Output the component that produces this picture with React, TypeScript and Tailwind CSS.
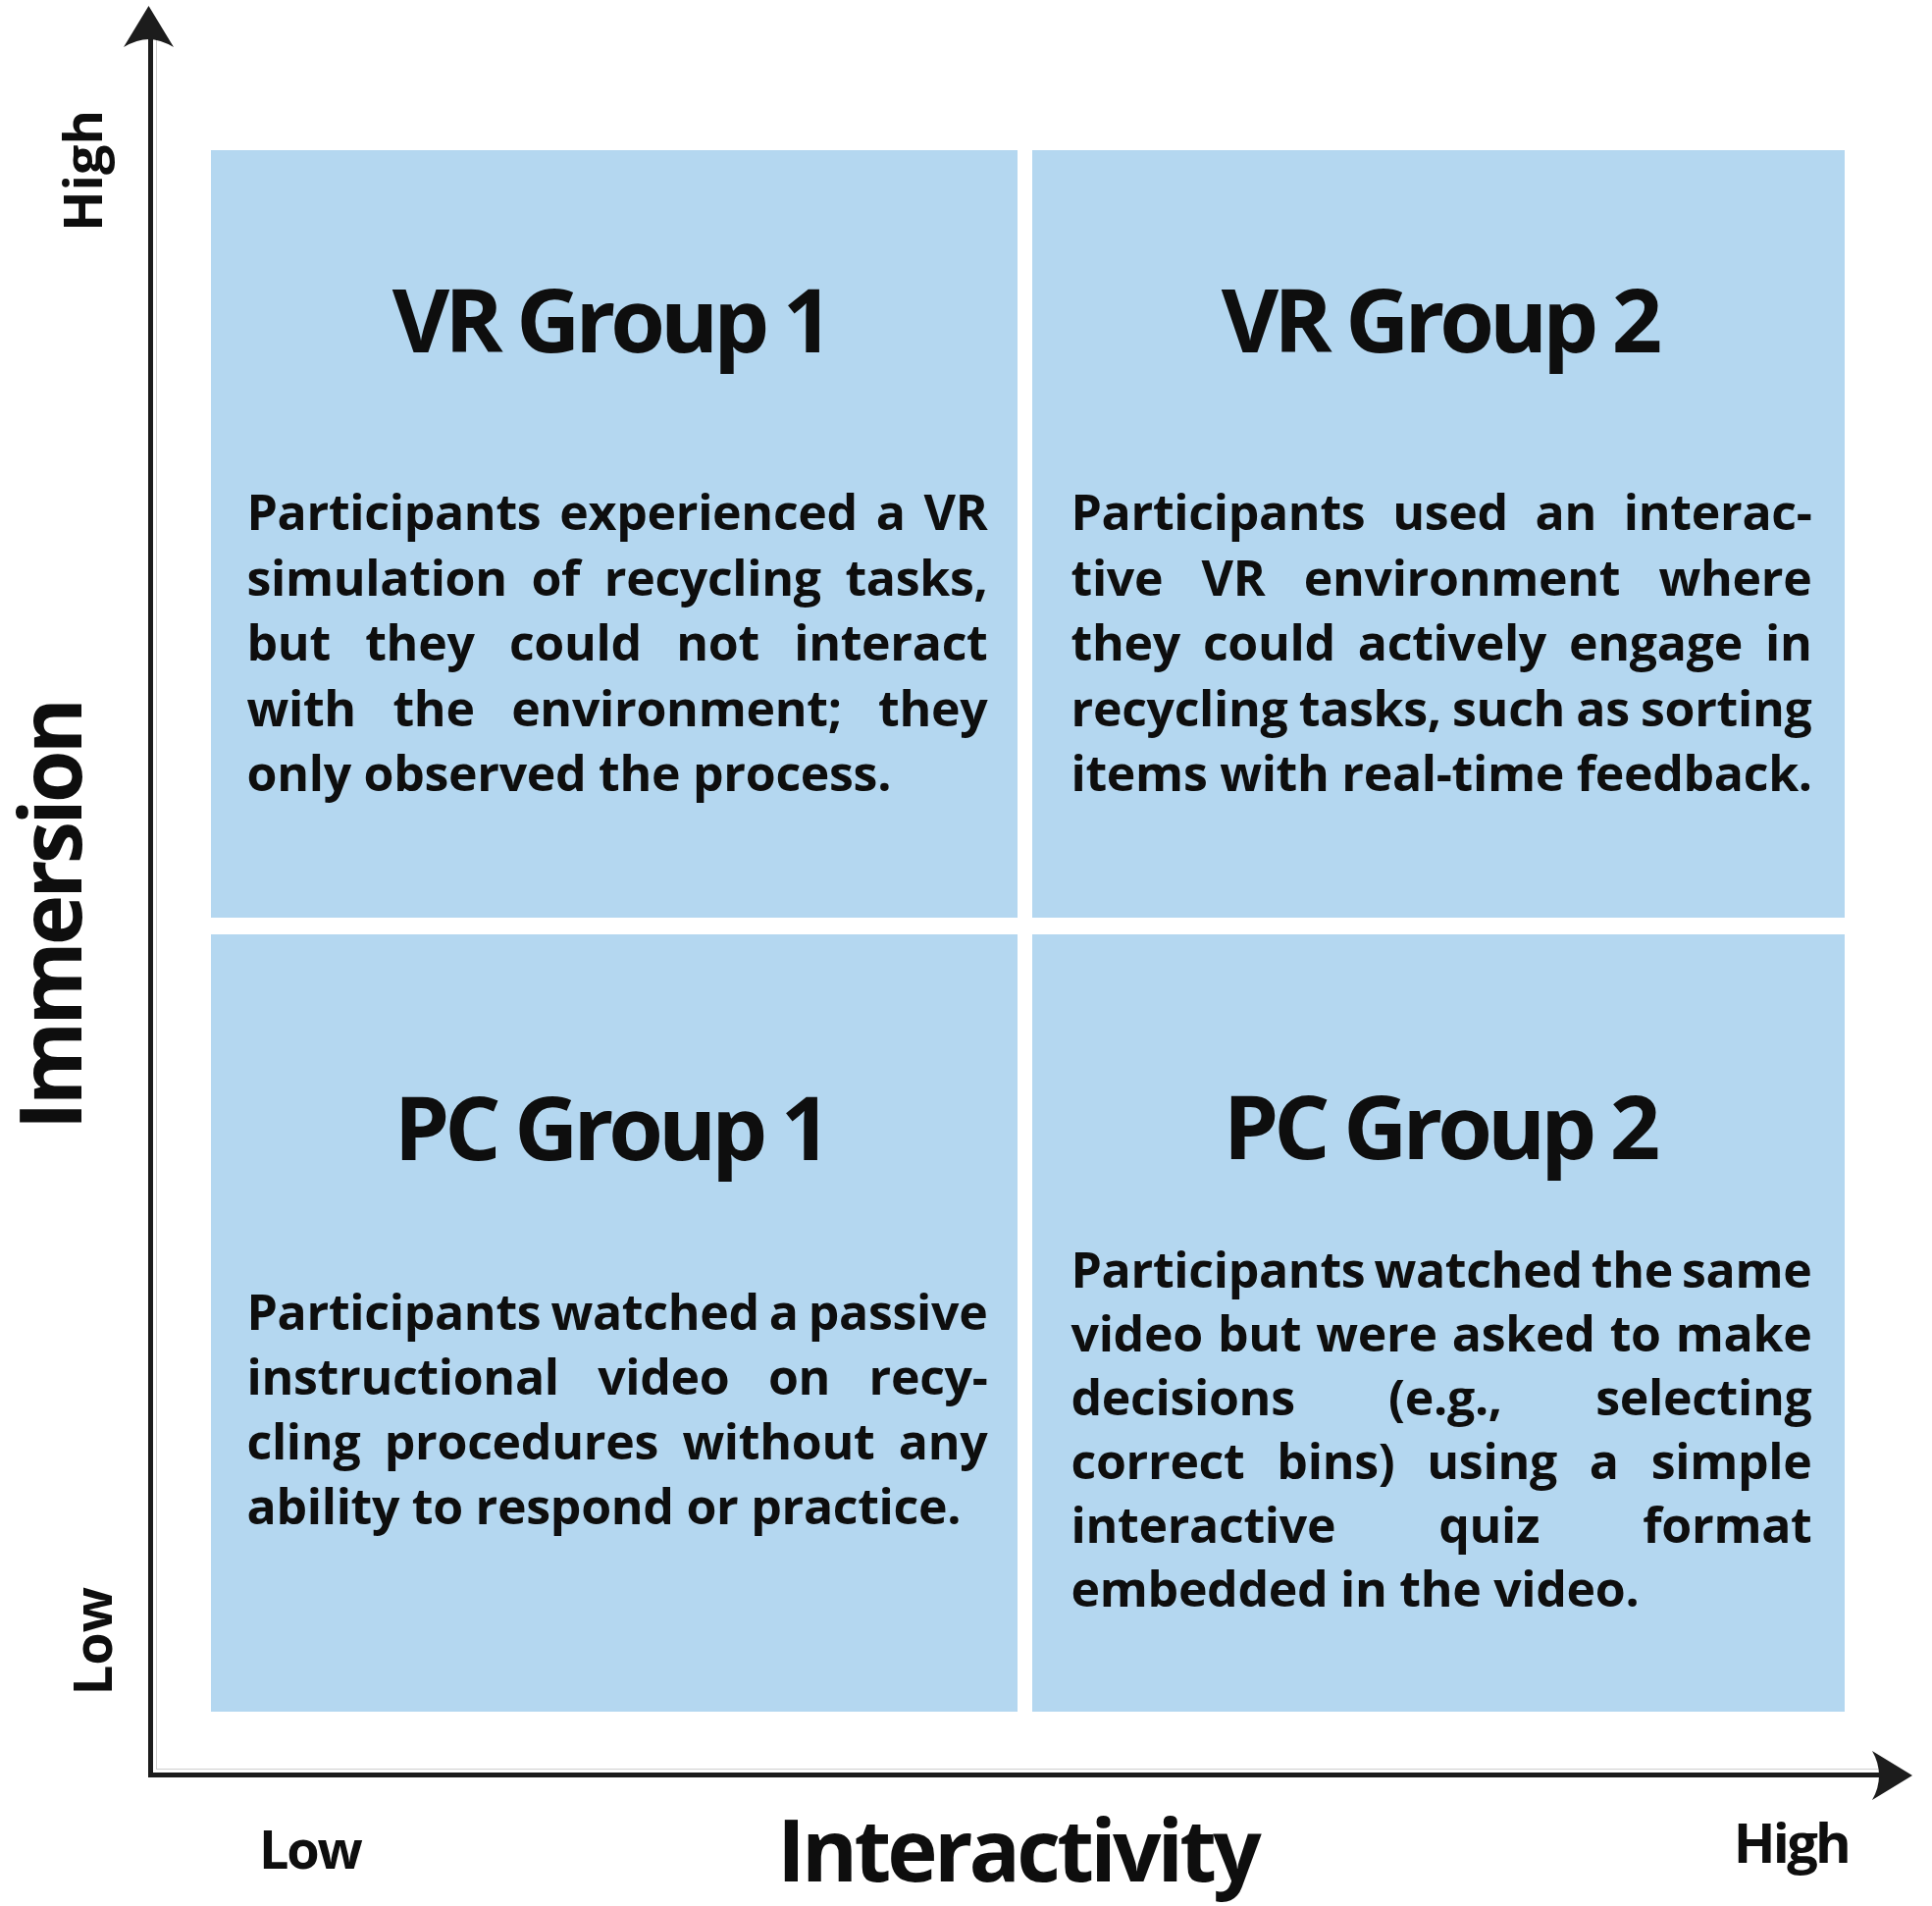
import React from "react";

type Panel = { title: string; lines: string[]; titleTop: string; bodyGap: string; lead: string };

const panels: Panel[] = [
  {
    title: "VR Group 1",
    titleTop: "pt-[126px]",
    bodyGap: "mt-[119px]",
    lead: "leading-[66.5px]",
    lines: [
      "Participants experienced a VR",
      "simulation of recycling tasks,",
      "but they could not interact",
      "with the environment; they",
      "only observed the process.",
    ],
  },
  {
    title: "VR Group 2",
    titleTop: "pt-[126px]",
    bodyGap: "mt-[119px]",
    lead: "leading-[66.5px]",
    lines: [
      "Participants used an interac-",
      "tive VR environment where",
      "they could actively engage in",
      "recycling tasks, such as sorting",
      "items with real-time feedback.",
    ],
  },
  {
    title: "PC Group 1",
    titleTop: "pt-[150px]",
    bodyGap: "mt-[111px]",
    lead: "leading-[66px]",
    lines: [
      "Participants watched a passive",
      "instructional video on recy-",
      "cling procedures without any",
      "ability to respond or practice.",
    ],
  },
  {
    title: "PC Group 2",
    titleTop: "pt-[149px]",
    bodyGap: "mt-[70px]",
    lead: "leading-[65px]",
    lines: [
      "Participants watched the same",
      "video but were asked to make",
      "decisions (e.g., selecting",
      "correct bins) using a simple",
      "interactive quiz format",
      "embedded in the video.",
    ],
  },
];

const Quadrant = ({ p, left }: { p: Panel; left: boolean }) => (
  <div className={`bg-[#b4d7f0] flex flex-col items-center ${p.titleTop}`}>
    <div className={`text-[90px] leading-none font-bold tracking-[-0.055em] whitespace-nowrap ${left ? "-ml-[8px]" : "ml-[2px]"}`}>{p.title}</div>
    <div className={`${p.bodyGap} w-[755px] text-[50px] font-bold tracking-[-0.006em] ${p.lead} ${left ? "ml-[6px]" : "ml-[6px]"}`}>
      {p.lines.map((line, i) =>
        i === p.lines.length - 1 ? (
          <div key={i} className="whitespace-nowrap">{line}</div>
        ) : (
          <div key={i} className="flex justify-between whitespace-nowrap">
            {line.split(" ").map((w, j) => (
              <span key={j}>{w}</span>
            ))}
          </div>
        )
      )}
    </div>
  </div>
);

export default function App() {
  return (
    <div className="w-[1969px] h-[1942px] bg-white overflow-hidden font-['Open_Sans',sans-serif] text-[#0e0e0e]">
      <div className="flex">
        {/* y axis labels */}
        <div className="w-[151px] shrink-0 flex flex-col">
          <div className="h-[600px] pt-[112px] pl-[56px]">
            <div className="[writing-mode:vertical-rl] rotate-180 text-[54px] leading-none font-bold">High</div>
          </div>
          <div className="h-[667px] flex items-center pl-[6px]">
            <div className="[writing-mode:vertical-rl] rotate-180 text-[87px] leading-none font-bold tracking-[-0.045em]">Immersion</div>
          </div>
          <div className="h-[460px] flex items-end pl-[66px]">
            <div className="[writing-mode:vertical-rl] rotate-180 text-[54px] leading-none font-bold">Low</div>
          </div>
        </div>

        {/* plot area */}
        <div className="relative mt-[40px] w-[1764px] h-[1771px] border-l-[5px] border-b-[5px] border-[#1c1c1c] shadow-[inset_3px_-3px_0_0_#fff,inset_4px_-4px_0_0_#cfcfcf]">
          <svg className="absolute -top-[34px] -left-[30px]" width="52" height="42" viewBox="0 0 52 42">
            <path d="M25.5 0 L51 42 Q37 34 25.5 34 Q14 34 0 42 Z" fill="#1c1c1c" />
          </svg>
          <svg className="absolute top-[1744px] left-[1752px]" width="41" height="50" viewBox="0 0 41 50">
            <path d="M41 25 L0 0 Q7 12 7 25 Q7 38 0 50 Z" fill="#1c1c1c" />
          </svg>

          <div className="pt-[113px] pl-[59px] grid grid-cols-[822px_828px] grid-rows-[782px_792px] gap-x-[15px] gap-y-[17px]">
            {panels.map((p, i) => (
              <Quadrant key={i} p={p} left={i % 2 === 0} />
            ))}
          </div>
        </div>
      </div>

      {/* x axis labels */}
      <div className="grid grid-cols-[650px_774px_460px]">
        <div className="pl-[264px] pt-[45px] text-[54px] leading-none font-bold tracking-[-0.04em]">Low</div>
        <div className="pt-[29px] text-center text-[87px] leading-none font-bold tracking-[-0.044em]">Interactivity</div>
        <div className="pt-[37px] text-right text-[56px] leading-none font-bold tracking-[-0.05em]">High</div>
      </div>
    </div>
  );
}
